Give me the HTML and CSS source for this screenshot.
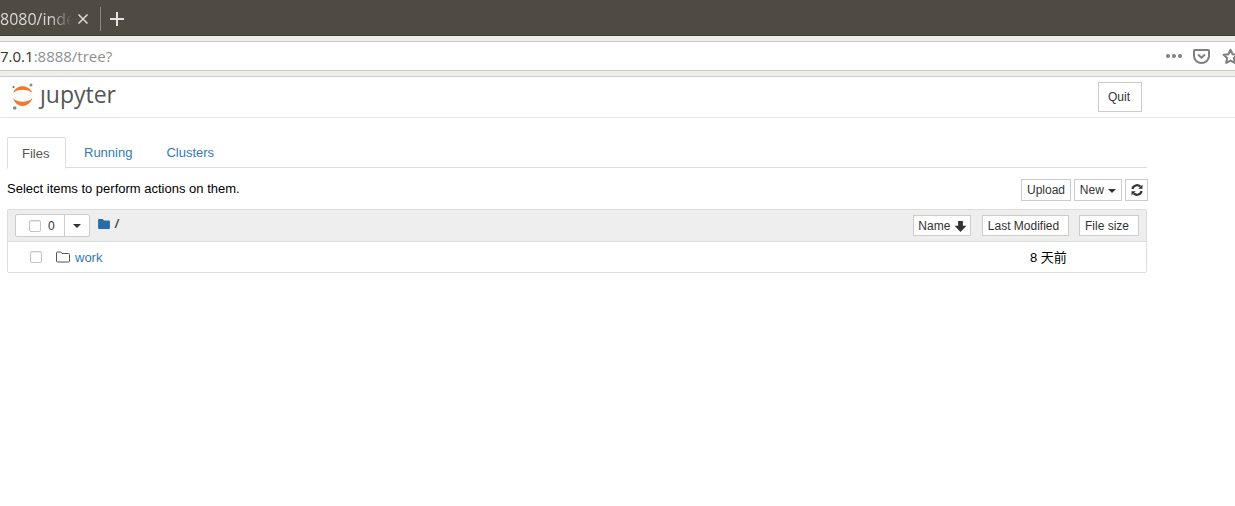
FILE: index.html
```html
<!DOCTYPE html>
<html lang="zh-CN">
<head>
    <meta charset="UTF-8">
    <meta name="viewport" content="width=device-width, initial-scale=1.0">
    <title>Home</title>
    <link rel="stylesheet" href="styles.css">
</head>
<body>
    <div class="tab-strip">
        <span class="tab-title">8080/inde</span>
        <svg class="tab-close" width="12" height="12" viewBox="0 0 12 12"><path d="M1.500 1.500l9 9M10.500 1.500l-9 9" stroke="#d8d6d2" stroke-width="1.600" fill="none"/></svg>
        <span class="tab-sep"></span>
        <svg class="tab-plus" width="16" height="16" viewBox="0 0 16 16"><path d="M8 1v14M1 8h14" stroke="#e4e2de" stroke-width="2" fill="none"/></svg>
    </div>
    <div class="url-wrap">
        <div class="url-bar">
            <span class="url-text"><b>7.0.1</b>:8888/tree?</span>
            <span class="dots"><i></i><i></i><i></i></span>
            <svg class="pocket" width="17" height="15" viewBox="0 0 17 15"><path d="M2 1h13a1 1 0 0 1 1 1v5a7.500 7 0 0 1-15 0V2a1 1 0 0 1 1-1z" fill="none" stroke="#7f7f7f" stroke-width="2"/><path d="M5 5.500l3.500 3.200L12 5.500" fill="none" stroke="#7f7f7f" stroke-width="2"/></svg>
            <svg class="star" width="17" height="17" viewBox="0 0 17 17"><path d="M8.500 1.800l2.100 4.400 4.800.6-3.500 3.300.9 4.800-4.300-2.300-4.300 2.300.9-4.800-3.500-3.300 4.800-.6z" fill="none" stroke="#7f7f7f" stroke-width="2" stroke-linejoin="round"/></svg>
        </div>
    </div>

    <div class="header">
        <div class="header-inner">
            <div class="logo">
                <svg width="24" height="30" viewBox="0 0 24 30">
                    <path d="M1 12C4 3 17 3 20.500 12C16 7.500 5 7.500 1 12z" fill="#f37726"/>
                    <path d="M1 17C4 27.500 17 27.500 20.500 17C16 22 5 22 1 17z" fill="#f37726"/>
                    <circle cx="19" cy="4" r="1.500" fill="#8c8c8c"/>
                    <circle cx="1.500" cy="6" r="1.100" fill="#6f6f6f"/>
                    <circle cx="2.700" cy="27" r="1.800" fill="#8a8a8a"/>
                </svg>
                <span class="logo-text">ȷupyter</span>
            </div>
            <button class="btn quit-btn">Quit</button>
        </div>
    </div>

    <div class="container">
        <div class="tabs">
            <a class="tab active">Files</a>
            <a class="tab">Running</a>
            <a class="tab">Clusters</a>
        </div>
        <div class="toolbar">
            <span class="hint">Select items to perform actions on them.</span>
            <div class="toolbar-btns">
                <button class="btn small upload-btn">Upload</button>
                <button class="btn small new-btn">New <i class="caret"></i></button>
                <button class="btn small refresh-btn">
                    <svg width="12" height="12" viewBox="0 0 12 12"><path d="M1.400 5A4.700 4.700 0 0 1 9.300 2.600M10.600 7A4.700 4.700 0 0 1 2.700 9.400" fill="none" stroke="#333" stroke-width="2.200"/><path d="M11.500 .6v4.200H7.300zM.5 11.400V7.200h4.200z" fill="#333"/></svg>
                </button>
            </div>
        </div>
        <div class="file-list">
            <div class="list-head">
                <div class="select-group">
                    <div class="select-count"><span class="check"></span><span>0</span></div>
                    <div class="select-drop"><i class="caret dark"></i></div>
                </div>
                <svg class="crumb-icon" width="12" height="10" viewBox="0 0 13 11"><path d="M1 0h4l1.500 1.700H12a1 1 0 0 1 1 1V10a1 1 0 0 1-1 1H1a1 1 0 0 1-1-1V1a1 1 0 0 1 1-1z" fill="#286ca8"/></svg>
                <span class="crumb">/</span>
                <button class="btn tiny name-btn">Name
                    <svg width="13" height="13" viewBox="0 0 12 12"><path d="M3.800 1h4.400v4.300h3.300L6 11 .5 5.300h3.300z" fill="#333"/></svg>
                </button>
                <button class="btn tiny modified-btn">Last Modified</button>
                <button class="btn tiny size-btn">File size</button>
            </div>
            <div class="list-row">
                <span class="check row-check"></span>
                <svg class="folder" width="14" height="12" viewBox="0 0 14 12"><path d="M1.500 1h3.300l1.300 1.500h6.400a1 1 0 0 1 1 1V10a1 1 0 0 1-1 1H1.500a1 1 0 0 1-1-1V2a1 1 0 0 1 1-1z" fill="none" stroke="#555" stroke-width="1"/></svg>
                <a class="item-name">work</a>
                <span class="item-time">8 天前</span>
            </div>
        </div>
    </div>
</body>
</html>
```

FILE: styles.css
```css
body, html {
    margin: 0;
    padding: 0;
    background: #fff;
    overflow: hidden;
}

body {
    font-family: "Liberation Sans", Arial, "Noto Sans CJK SC", sans-serif;
    font-size: 13px;
    color: #000;
}

/* browser top */
.tab-strip {
    height: 36px;
    box-sizing: border-box;
    padding-top: 2px;
    background-color: #4f4b43;
    border-bottom: 1px solid #3c3a34;
    display: flex;
    align-items: center;
}

.tab-title {
    width: 72px;
    white-space: nowrap;
    font-family: "Open Sans", "Noto Sans", sans-serif;
    font-size: 16px;
    color: #d9d7d3;
    -webkit-mask-image: linear-gradient(to right, #000 70%, transparent 100%);
    mask-image: linear-gradient(to right, #000 70%, transparent 100%);
}

.tab-close {
    margin-left: 5px;
}

.tab-sep {
    width: 1px;
    height: 24px;
    margin-left: 11px;
    background: #8a8780;
}

.tab-plus {
    margin-left: 8px;
}

.url-wrap {
    height: 41px;
    box-sizing: border-box;
    padding: 5px 0;
    background: #f0eeeb;
    border-bottom: 1px solid #cfcbc6;
}

.url-bar {
    height: 30px;
    box-sizing: border-box;
    background: #fff;
    border-top: 1px solid #c8c8c8;
    border-bottom: 1px solid #c8c8c8;
    display: flex;
    align-items: center;
    overflow: hidden;
}

.url-text {
    font-family: "Open Sans", "Noto Sans", sans-serif;
    font-size: 15px;
    color: #8f8f8f;
    flex: 1;
}

.url-text b {
    font-weight: normal;
    color: #333;
}

.dots {
    display: flex;
    gap: 2px;
}

.dots i {
    width: 4px;
    height: 4px;
    border-radius: 50%;
    background: #7f7f7f;
}

.pocket {
    margin-left: 11px;
    flex-shrink: 0;
}

.star {
    margin-left: 12px;
    margin-right: -4px;
    flex-shrink: 0;
}

/* jupyter header */
.header {
    height: 40px;
    border-bottom: 1px solid #e7e7e7;
}

.header-inner {
    width: 1130px;
    margin-left: 12px;
    display: flex;
    justify-content: space-between;
    align-items: flex-start;
}

.logo {
    display: flex;
    align-items: center;
    height: 38px;
}

.logo-text {
    font-family: "Open Sans", "Noto Sans", sans-serif;
    font-size: 23px;
    color: #555;
    margin-left: 4px;
    margin-top: -4px;
}

.btn {
    font-family: inherit;
    font-size: 12px;
    color: #333;
    background: #fff;
    border: 1px solid #ccc;
    padding: 0;
    box-sizing: border-box;
}

.quit-btn {
    width: 44px;
    height: 30px;
    margin-top: 5px;
    padding-right: 2px;
}

.container {
    width: 1140px;
    margin-left: 7px;
}

.tabs {
    margin-top: 19px;
    height: 30px;
    border-bottom: 1px solid #ddd;
    display: flex;
}

.tab {
    height: 30px;
    line-height: 32px;
    padding: 0 17px;
    color: #337ab7;
    font-size: 13px;
}

.tab.active {
    height: 30px;
    width: 28px;
    padding: 0 15px 0 14px;
    margin-right: 1px;
    color: #555;
    border: 1px solid #ddd;
    border-bottom: 1px solid #fff;
    border-radius: 2px 2px 0 0;
    background: #fff;
}

.toolbar {
    height: 41px;
    display: flex;
    justify-content: space-between;
    align-items: flex-start;
}

.hint {
    margin-top: 13px;
}

.toolbar-btns {
    display: flex;
    margin-top: 11px;
    margin-right: -1px;
    gap: 3px;
}

.small {
    height: 22px;
}

.upload-btn {
    width: 50px;
}

.new-btn {
    width: 48px;
}

.refresh-btn {
    width: 23px;
    display: flex;
    align-items: center;
    justify-content: center;
}

.caret {
    display: inline-block;
    width: 0;
    height: 0;
    margin-left: 1px;
    vertical-align: middle;
    border-top: 4px solid #333;
    border-left: 4px solid transparent;
    border-right: 4px solid transparent;
}

.file-list {
    border: 1px solid #ddd;
    border-radius: 2px;
}

.list-head {
    height: 31px;
    background: #eee;
    border-bottom: 1px solid #ddd;
    display: flex;
    align-items: center;
    box-sizing: content-box;
}

.select-group {
    display: flex;
    height: 21px;
    margin-left: 7px;
    background: #fff;
    border: 1px solid #ccc;
    border-radius: 2px;
    box-sizing: content-box;
}

.select-count {
    width: 48px;
    display: flex;
    align-items: center;
    font-size: 12px;
    color: #333;
    border-right: 1px solid #ccc;
}

.check {
    display: inline-block;
    width: 12px;
    height: 12px;
    box-sizing: border-box;
    background: #fff;
    border: 1px solid #c4c4c4;
    border-radius: 2px;
    box-shadow: inset 0 1px 1px rgba(0,0,0,.08);
}

.select-count .check {
    margin: 0 7px 0 13px;
}

.select-count span:last-child {
    margin-top: 1px;
}

.select-drop {
    width: 24px;
    padding-right: 1px;
    box-sizing: border-box;
    display: flex;
    align-items: center;
    justify-content: center;
}

.crumb-icon {
    margin-left: 8px;
    margin-top: -3px;
}

.crumb {
    margin-left: 5px;
    margin-top: -3px;
    font-size: 12px;
    font-weight: bold;
    font-style: italic;
    color: #444;
    flex: 1;
}

.tiny {
    height: 21px;
    padding-top: 1px;
}

.name-btn {
    width: 58px;
    padding-left: 1px;
    margin-top: -1px;
}

.name-btn svg {
    vertical-align: -3px;
}

.modified-btn {
    width: 87px;
    padding-right: 4px;
    margin-left: 11px;
    margin-top: -1px;
}

.size-btn {
    width: 60px;
    padding-right: 4px;
    margin-left: 10px;
    margin-right: 7px;
    margin-top: -1px;
}

.list-row {
    height: 30px;
    display: flex;
    align-items: center;
}

.row-check {
    margin-left: 22px;
}

.folder {
    margin-left: 14px;
    margin-top: -1px;
}

.item-name {
    margin-left: 5px;
    color: #337ab7;
    flex: 1;
}

.item-time {
    width: 116px;
    margin-top: -1px;
}
```
